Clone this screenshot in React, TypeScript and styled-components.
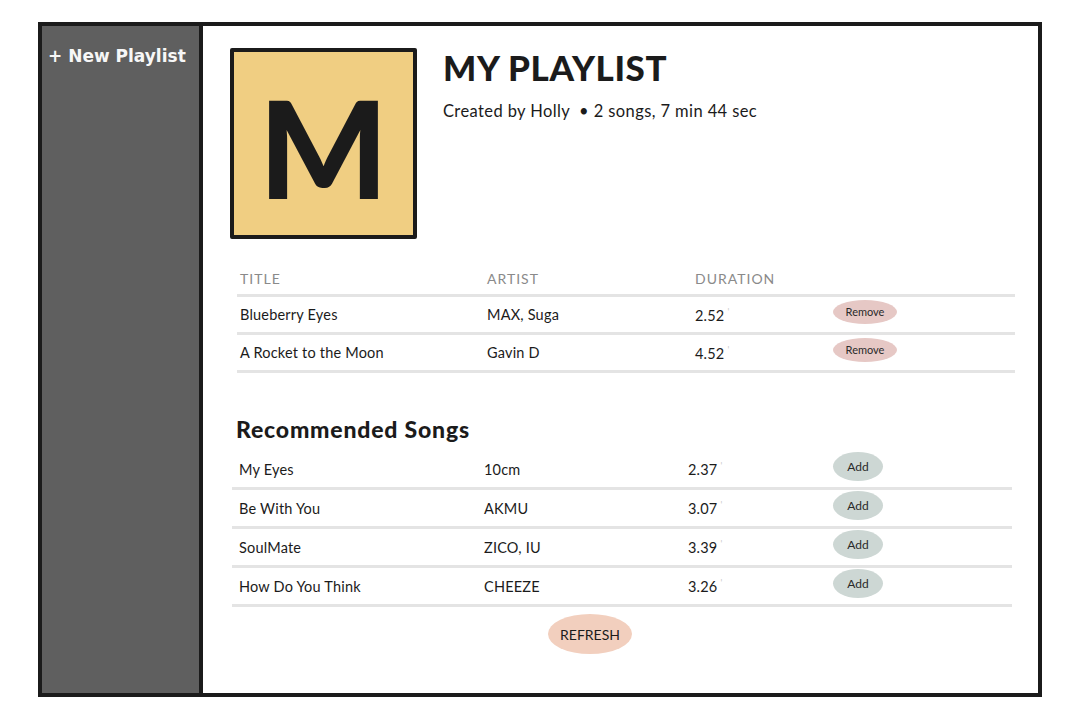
import styled, { createGlobalStyle } from 'styled-components';

const GlobalStyle = createGlobalStyle`
	html, body {
		margin: 0;
		padding: 0;
		background: #ffffff;
	}
	body {
		font-family: 'Lato', 'Noto Sans', sans-serif;
		color: #1b1b1b;
	}
`;

type Song = { title: string; artist: string; duration: string };

const playlist: Song[] = [
	{ title: 'Blueberry Eyes', artist: 'MAX, Suga', duration: '2.52' },
	{ title: 'A Rocket to the Moon', artist: 'Gavin D', duration: '4.52' },
];

const recommended: Song[] = [
	{ title: 'My Eyes', artist: '10cm', duration: '2.37' },
	{ title: 'Be With You', artist: 'AKMU', duration: '3.07' },
	{ title: 'SoulMate', artist: 'ZICO, IU', duration: '3.39' },
	{ title: 'How Do You Think', artist: 'CHEEZE', duration: '3.26' },
];

export default function App() {
	return (
		<>
			<GlobalStyle />
			<Frame>
				<Sidebar>
					<NewPlaylist>+ New Playlist</NewPlaylist>
				</Sidebar>
				<Main>
					<Header>
						<Cover>M</Cover>
						<HeaderText>
							<Title>MY PLAYLIST</Title>
							<Meta>Created by Holly &nbsp;• 2 songs, 7 min 44 sec</Meta>
						</HeaderText>
					</Header>

					<Table>
						<HeadRow>
							<HeadCell>TITLE</HeadCell>
							<HeadCell>ARTIST</HeadCell>
							<HeadCell>DURATION</HeadCell>
							<span />
						</HeadRow>
						{playlist.map((s) => (
							<Row key={s.title} $height={35}>
								<Cell>{s.title}</Cell>
								<Cell>{s.artist}</Cell>
								<Cell>
									{s.duration}
									<Tick>'</Tick>
								</Cell>
								<Pill $kind='remove'>Remove</Pill>
							</Row>
						))}
					</Table>

					<SectionTitle>Recommended Songs</SectionTitle>
					<RecTable>
						{recommended.map((s) => (
							<RecRow key={s.title} $height={36}>
								<Cell>{s.title}</Cell>
								<Cell>{s.artist}</Cell>
								<Cell>
									{s.duration}
									<Tick>'</Tick>
								</Cell>
								<Pill $kind='add'>Add</Pill>
							</RecRow>
						))}
					</RecTable>
					<Refresh>REFRESH</Refresh>
				</Main>
			</Frame>
		</>
	);
}

const Frame = styled.div`
	display: flex;
	box-sizing: border-box;
	margin: 22px 0 0 38px;
	width: 1004px;
	height: 675px;
	border: 4px solid #1b1b1b;
	background: #ffffff;
`;

const Sidebar = styled.aside`
	flex: 0 0 157px;
	background: #5f5f5f;
	border-right: 4px solid #1b1b1b;
	padding-top: 20px;
`;

const NewPlaylist = styled.div`
	color: #f7f7f7;
	font-family: 'DejaVu Sans', 'Lato', sans-serif;
	font-weight: 700;
	font-size: 17px;
	padding-left: 6px;
	white-space: nowrap;
`;

const Main = styled.main`
	flex: 1;
	padding: 22px 0 0 27px;
	box-sizing: border-box;
`;

const Header = styled.div`
	display: flex;
	gap: 26px;
	align-items: flex-start;
`;

const Cover = styled.div`
	box-sizing: border-box;
	width: 187px;
	height: 191px;
	background: #f0ce82;
	border: 4px solid #1b1b1b;
	border-radius: 2px;
	display: flex;
	align-items: center;
	justify-content: center;
	font-size: 136px;
	font-weight: 900;
	color: #1b1b1b;
	line-height: 1;
	padding-top: 6px;
`;

const HeaderText = styled.div`
	display: flex;
	flex-direction: column;
`;

const Title = styled.h1`
	margin: 0;
	font-size: 35px;
	font-weight: 900;
	letter-spacing: 0.6px;
	line-height: 38px;
`;

const Meta = styled.p`
	margin: 15px 0 0;
	font-size: 16.5px;
	font-weight: 400;
	letter-spacing: 0.4px;
`;

const Table = styled.div`
	width: 778px;
	margin: 23px 0 0 7px;
`;

const HeadRow = styled.div`
	display: grid;
	grid-template-columns: 247px 208px 138px 1fr;
	align-items: center;
	height: 32px;
	padding-left: 3px;
	border-bottom: 3px solid #e4e4e4;
`;

const HeadCell = styled.span`
	font-size: 14px;
	color: #8a8a8a;
	letter-spacing: 1px;
`;

const Row = styled.div<{ $height: number }>`
	display: grid;
	grid-template-columns: 247px 208px 138px 1fr;
	align-items: center;
	height: ${(p) => p.$height}px;
	padding-left: 3px;
	border-bottom: 3px solid #e4e4e4;
`;

const RecTable = styled.div`
	width: 780px;
	margin: 8px 0 0 2px;
`;

const RecRow = styled(Row)`
	grid-template-columns: 245px 204px 145px 1fr;
	padding-left: 7px;
`;

const Cell = styled.span`
	font-size: 14.5px;
	color: #1b1b1b;
	letter-spacing: 0.2px;
`;

const Tick = styled.span`
	font-size: 9px;
	color: #c8c8c8;
	margin-left: 3px;
	vertical-align: super;
`;

const Pill = styled.span<{ $kind: 'add' | 'remove' }>`
	justify-self: start;
	display: inline-flex;
	align-items: center;
	justify-content: center;
	width: ${(p) => (p.$kind === 'add' ? '50px' : '64px')};
	height: ${(p) => (p.$kind === 'add' ? '29px' : '24px')};
	margin-top: -6px;
	background: ${(p) => (p.$kind === 'add' ? '#cdd7d4' : '#e6c8c5')};
	border-radius: 50%;
	font-size: ${(p) => (p.$kind === 'add' ? '12px' : '11px')};
	color: #2a2a2a;
`;

const SectionTitle = styled.h2`
	margin: 42px 0 0 6px;
	font-size: 23px;
	font-weight: 900;
	letter-spacing: 0.8px;
	line-height: 28px;
`;

const Refresh = styled.div`
	display: flex;
	align-items: center;
	justify-content: center;
	width: 84px;
	height: 40px;
	margin: 7px 0 0 318px;
	background: #f2cfbe;
	border-radius: 50%;
	font-size: 14px;
	color: #1b1b1b;
`;
